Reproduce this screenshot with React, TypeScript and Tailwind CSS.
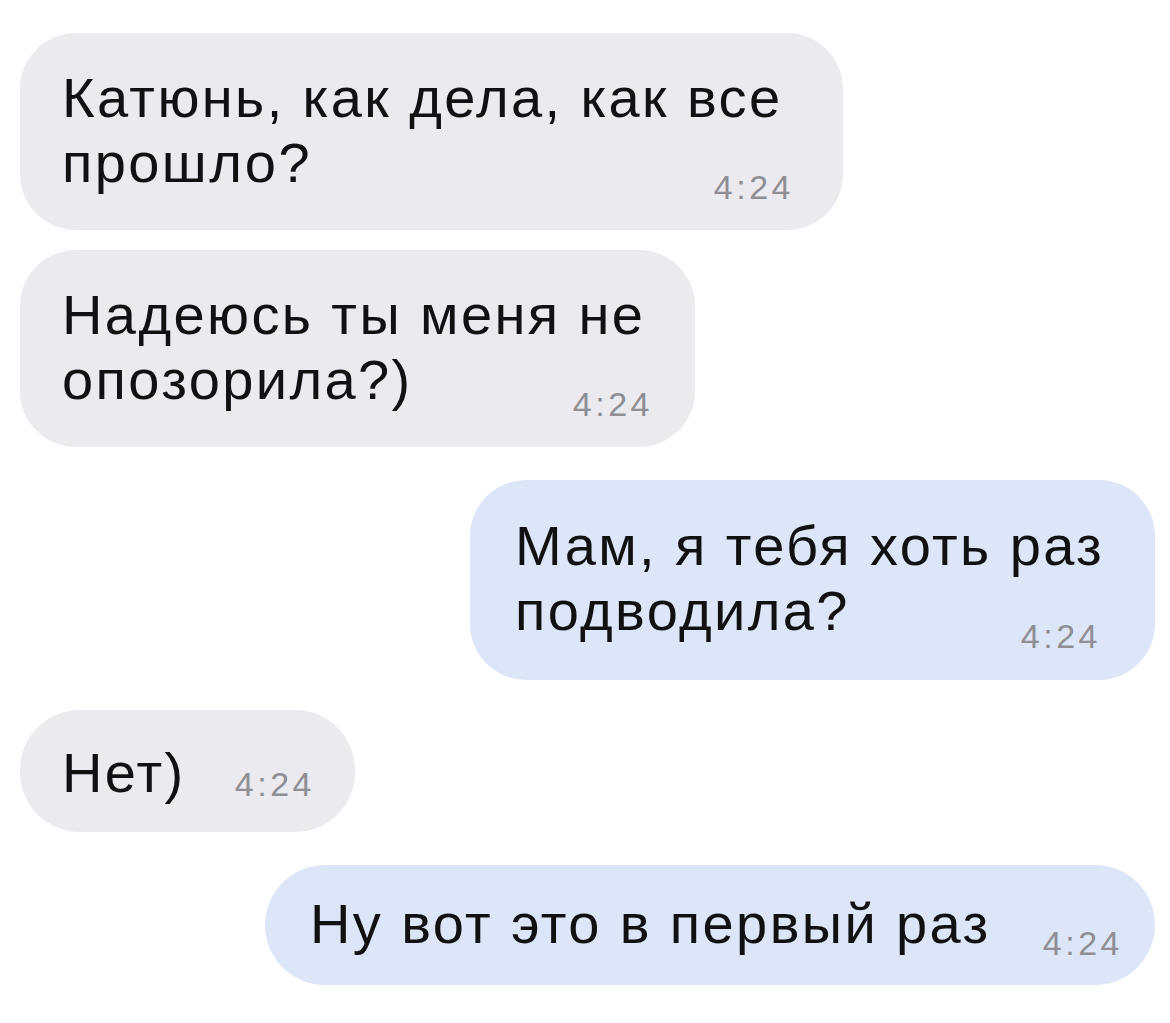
import React from "react";

const font = { fontFamily: '"Liberation Sans", Arial, sans-serif' };

type Side = "in" | "out";

const Time = ({ className = "" }: { className?: string }) => (
  <span className={`text-[34px] leading-none text-[#8e8e93] tracking-[3.5px] ${className}`}>4:24</span>
);

const TwoLine = ({
  side,
  lines,
  className,
  timeClass,
}: {
  side: Side;
  lines: [string, string];
  className: string;
  timeClass: string;
}) => (
  <div
    className={`${side === "in" ? "bg-[#eaeaef] self-start" : "bg-[#dce6f8] self-end"} rounded-[56px] ${className}`}
  >
    <p className="text-[56px] leading-[65px] text-[#111] tracking-[2.4px] whitespace-nowrap">
      {lines[0]}
      <br />
      {lines[1]}
    </p>
    <div className={`flex justify-end ${timeClass}`}>
      <Time />
    </div>
  </div>
);

const OneLine = ({
  side,
  text,
  className,
  timeClass,
}: {
  side: Side;
  text: string;
  className: string;
  timeClass: string;
}) => (
  <div
    className={`${side === "in" ? "bg-[#eaeaef] self-start" : "bg-[#dce6f8] self-end"} rounded-[60px] flex items-baseline justify-between ${className}`}
  >
    <span className="text-[56px] leading-[65px] text-[#111] tracking-[2.4px] whitespace-nowrap">{text}</span>
    <Time className={timeClass} />
  </div>
);

export default function App() {
  return (
    <div className="w-[1170px] h-[1023px] bg-white overflow-hidden" style={font}>
      <div className="flex flex-col pt-[33px] pl-[20px] pr-[15px]">
        <TwoLine
          side="in"
          lines={["Катюнь, как дела, как все", "прошло?"]}
          className="w-[823px] h-[197px] pl-[42px] pr-[49px] pt-[32px]"
          timeClass="-mt-[25px]"
        />
        <TwoLine
          side="in"
          lines={["Надеюсь ты меня не", "опозорила?)"]}
          className="mt-[20px] w-[675px] h-[197px] pl-[42px] pr-[42px] pt-[32px]"
          timeClass="-mt-[25px]"
        />
        <TwoLine
          side="out"
          lines={["Мам, я тебя хоть раз", "подводила?"]}
          className="mt-[33px] w-[685px] h-[200px] pl-[45px] pr-[54px] pt-[33px]"
          timeClass="-mt-[24px]"
        />
        <OneLine
          side="in"
          text="Нет)"
          className="mt-[30px] w-[335px] h-[122px] pl-[42px] pr-[40px] pt-[30px]"
          timeClass="translate-y-[4px]"
        />
        <OneLine
          side="out"
          text="Ну вот это в первый раз"
          className="mt-[33px] w-[890px] h-[120px] pl-[45px] pr-[32px] pt-[26px]"
          timeClass="translate-y-[12px]"
        />
      </div>
    </div>
  );
}
